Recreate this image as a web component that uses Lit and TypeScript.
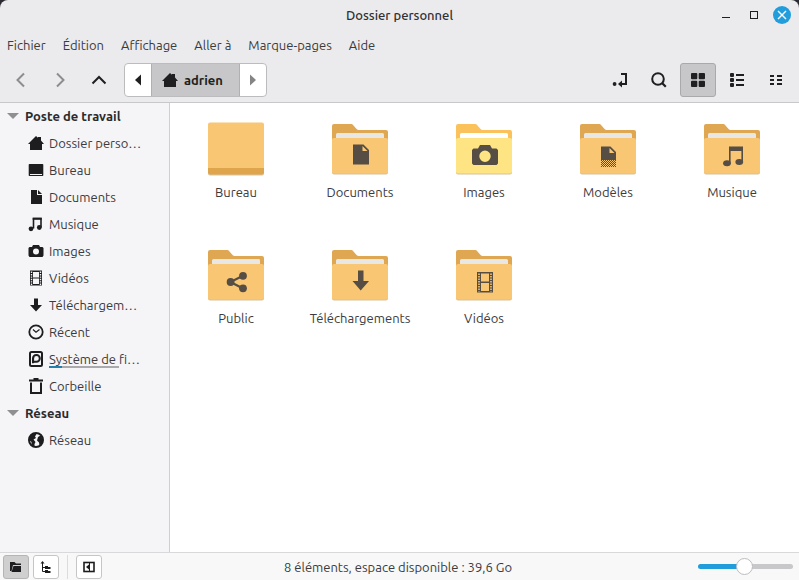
import { LitElement, html, css, svg } from "lit";
import type { SVGTemplateResult } from "lit";
import { customElement, state } from "lit/decorators.js";
import { classMap } from "lit/directives/class-map.js";

/* 16-unit symbolic glyphs, drawn in the current text colour */
const glyphs: Record<string, SVGTemplateResult> = {
  home: svg`<path d="M8 1 10 2.8V2h3v3.6L16 9h-2v6H2V9H0z" fill="currentColor"/>`,
  desktop: svg`<path d="M1.500 2h13a.8.8 0 0 1 .8.8v10.400a.8.8 0 0 1-.8.8h-13a.8.8 0 0 1-.8-.8V2.800a.8.8 0 0 1 .8-.8z" fill="currentColor"/><path d="M2 12.500h12" stroke="#f5f5f7"/>`,
  document: svg`<path d="M3 1h6v5h5v9H3z" fill="currentColor"/><path d="M10 1l4 4h-4z" fill="currentColor"/>`,
  music: svg`<path d="M5.500 12.500V2.500H13v9" fill="none" stroke="currentColor" stroke-width="1.600"/><path d="M4.700 1.700h9v2h-9z" fill="currentColor"/><circle cx="3" cy="12.800" r="2.400" fill="currentColor"/><circle cx="11.300" cy="11.500" r="2.400" fill="currentColor"/>`,
  camera: svg`<path fill-rule="evenodd" d="M5 2h6l1 2h2.500L15.500 5v7.500l-1 1.500h-13l-1-1.500V5l1-1H4zM8 5.500a3 3 0 1 0 0 6 3 3 0 0 0 0-6z" fill="currentColor"/>`,
  film: svg`<path fill-rule="evenodd" d="M2 .5h12v15H2zM5 2v5.400h6V2zM5 8.600V14h6V8.600z" fill="currentColor"/><path d="M3.500 1.600v14M12.500 1.600v14" stroke="#f5f5f7" stroke-width="1.400" stroke-dasharray="1.400 1"/>`,
  download: svg`<path d="M6 1.500h4V8h4l-6 6.500L2 8h4z" fill="currentColor"/>`,
  recent: svg`<circle cx="8" cy="8" r="6.700" fill="none" stroke="currentColor" stroke-width="1.800"/><path d="M5 5.500 8 8.300l3.500-2.800" fill="none" stroke="currentColor" stroke-width="1.200"/>`,
  disk: svg`<rect x="2" y="1" width="12" height="14" rx="1.500" fill="none" stroke="currentColor" stroke-width="2"/><path fill-rule="evenodd" d="M4 12.200V7.500a4.400 4.400 0 1 1 4.400 4.300H6.500L5.500 12.200zM8.500 5.100a2.400 2.400 0 0 0-2.400 2.400v2.200h2.400a2.300 2.300 0 0 0 0-4.600z" fill="currentColor"/>`,
  trash: svg`<path d="M1 2.500h14M5.500 1h5" stroke="currentColor" stroke-width="2"/><path d="M3 4.500V15h10V4.500" fill="none" stroke="currentColor" stroke-width="2"/>`,
  globe: svg`<circle cx="8" cy="8" r="7" fill="none" stroke="currentColor" stroke-width="2"/><path d="M1.500 5 5 1.500l3.500.5L7 4.500 8 6 5.500 7.500 7.500 10l-1 2v3L3.500 13V10L1 8zM10 5l2.500-1.500L15 7l-1 4-2.500 2.500-.5-3L9 8.500z" fill="currentColor"/>`,
  back: svg`<path d="M11 1.500 4.500 8l6.500 6.500" fill="none" stroke="currentColor" stroke-width="2"/>`,
  forward: svg`<path d="M5 1.500 11.500 8 5 14.500" fill="none" stroke="currentColor" stroke-width="2"/>`,
  up: svg`<path d="M1.500 11.500 8 5l6.500 6.500" fill="none" stroke="currentColor" stroke-width="2"/>`,
  left: svg`<path d="M11 2.500v11L5 8z" fill="currentColor"/>`,
  right: svg`<path d="M5 2.500v11L11 8z" fill="currentColor"/>`,
  location: svg`<path d="M9 2h5v10H9.500" fill="none" stroke="currentColor" stroke-width="2"/><path d="M10 8.500v7L6 12z" fill="currentColor"/><circle cx="2.600" cy="12" r="1.900" fill="currentColor"/>`,
  search: svg`<circle cx="7" cy="7" r="5.800" fill="none" stroke="currentColor" stroke-width="2"/><path d="m11 11 3.800 3.800" stroke="currentColor" stroke-width="2.200"/>`,
  grid: svg`<rect x="1" y="1" width="6.300" height="6.300" rx="1" fill="currentColor"/><rect x="8.700" y="1" width="6.300" height="6.300" rx="1" fill="currentColor"/><rect x="1" y="8.700" width="6.300" height="6.300" rx="1" fill="currentColor"/><rect x="8.700" y="8.700" width="6.300" height="6.300" rx="1" fill="currentColor"/>`,
  list: svg`<rect x="1" y="1" width="4" height="4" rx="1" fill="currentColor"/><rect x="1" y="6" width="4" height="4" rx="1" fill="currentColor"/><rect x="1" y="11" width="4" height="4" rx="1" fill="currentColor"/><path d="M7 3h8M7 8h8M7 13h8" stroke="currentColor" stroke-width="2"/>`,
  compact: svg`<path d="M2 4h4M2 8h4M2 12h4M9 4h5M9 8h5M9 12h5" stroke="currentColor" stroke-width="2"/>`,
  minimize: svg`<path d="M4 10.500h8" stroke="currentColor"/>`,
  maximize: svg`<rect x="4.500" y="4.500" width="7" height="7" fill="none" stroke="currentColor"/>`,
  close: svg`<path d="m4 4 8 8M12 4l-8 8" stroke="currentColor" stroke-width="1.400"/>`,
  folder: svg`<path d="M2 3h4.500L8 4.500h5V6H5l-1.500 6H2z" fill="currentColor"/><path d="M5.500 7H13v6H3.500z" fill="currentColor"/>`,
  tree: svg`<path d="M4.500 4v8.500H7M4.500 8.500H7" fill="none" stroke="currentColor"/><path d="M2.500 4.500 4.500 2l2 2.500zM7 7h3v1h2.500v2H7zM7 11h3v1h2.500v2H7z" fill="currentColor"/>`,
  panel: svg`<rect x="3" y="3.500" width="10" height="9" fill="none" stroke="currentColor" stroke-width="1.600"/><path d="M8.500 3v10" stroke="currentColor"/><path d="M8 5.500v5L5 8z" fill="currentColor"/>`,
};

/* 64-unit emblems stamped on the folder fronts */
const emblems: Record<string, SVGTemplateResult> = {
  document: svg`<path fill-rule="evenodd" d="M25 27.500h10.500l5.500 5.500v14.500H25zM34.500 29v5h5z"/>`,
  camera: svg`<path fill-rule="evenodd" d="M28 28h10l2 3.500h4.500l1.500 1.500v13.500l-1.500 1.500h-23L20 46.500V33l1.500-1.500H26zM33 33.500a5.700 5.700 0 1 0 0 11.400 5.700 5.700 0 0 0 0-11.400z"/>`,
  template: svg`<path fill-rule="evenodd" d="M25 29.500h9.500l5.500 5.500v8H25zM33.500 31v5h5z"/><path d="M25 43.500h15M25 45.500h15M25 47.500h15M25 49.500h15" stroke="#564e45" stroke-dasharray="1 1"/><path d="M26 44.500h14M26 46.500h14M26 48.500h14" stroke="#564e45" stroke-dasharray="1 1"/>`,
  music: svg`<path d="M29 29.500h14V46h-1.600V34H30.600v12.500H29z"/><ellipse cx="27" cy="46.300" rx="3.900" ry="3"/><ellipse cx="39.300" cy="45" rx="3.900" ry="3"/>`,
  share: svg`<path d="M39 32.800 26.500 39 39 45.500" fill="none" stroke="#564e45" stroke-width="2.200"/><circle cx="39" cy="32.800" r="3.900"/><circle cx="26.600" cy="39" r="3.900"/><circle cx="39" cy="45.300" r="3.900"/>`,
  download: svg`<path d="M30 27.500h5.500V38H41l-8.300 9.500L24.500 38H30z"/>`,
  film: svg`<path fill-rule="evenodd" d="M25 29h16v20.500H25zM29 30.500v8h8v-8zM29 40v8h8v-8z"/><path d="M27 30.500v18M39 30.500v18" stroke="#f9c673" stroke-width="1.600" stroke-dasharray="1.500 1"/>`,
};

const icon = (name: string) =>
  html`<svg class="icon" viewBox="0 0 16 16" aria-hidden="true">${glyphs[name]}</svg>`;

const folderArt = (emblem: string, bright = false) => html`
  <svg class="art" viewBox="0 0 64 64" aria-hidden="true">
    <path d="M6 7h17.500c2 0 4.500 6 7 6H58a2 2 0 0 1 2 2v14H4V9a2 2 0 0 1 2-2z" fill=${bright ? "#fbc25c" : "#dfa752"} />
    <path d="M8 24v-6.500A1.500 1.500 0 0 1 9.500 16h45a1.500 1.500 0 0 1 1.500 1.500V24z" fill=${bright ? "#ffffff" : "#e9e7e4"} />
    <path d="M4 24h56v31.500a2 2 0 0 1-2 2H6a2 2 0 0 1-2-2z" fill="#d8c19a" />
    <rect x="4" y="21" width="56" height="35.500" rx="2" fill=${bright ? "#ffe484" : "#f9c673"} />
    <g fill="#564e45">${emblems[emblem]}</g>
  </svg>
`;

const desktopArt = () => html`
  <svg class="art" viewBox="0 0 64 64" aria-hidden="true">
    <rect x="4" y="8" width="56" height="50.500" rx="2" fill="#d9c4a0" />
    <rect x="4" y="7" width="56" height="50.500" rx="2" fill="#dfa54c" />
    <path d="M6 5.500h52a2 2 0 0 1 2 2V51H4V7.500a2 2 0 0 1 2-2z" fill="#f9c673" />
  </svg>
`;

interface Place { label: string; icon: string; usage?: number; }

const sections: { title: string; places: Place[] }[] = [
  {
    title: "Poste de travail",
    places: [
      { label: "Dossier perso…", icon: "home" },
      { label: "Bureau", icon: "desktop" },
      { label: "Documents", icon: "document" },
      { label: "Musique", icon: "music" },
      { label: "Images", icon: "camera" },
      { label: "Vidéos", icon: "film" },
      { label: "Téléchargem…", icon: "download" },
      { label: "Récent", icon: "recent" },
      { label: "Système de fi…", icon: "disk", usage: 18 },
      { label: "Corbeille", icon: "trash" },
    ],
  },
  { title: "Réseau", places: [{ label: "Réseau", icon: "globe" }] },
];

const files = [
  { label: "Bureau", emblem: "" },
  { label: "Documents", emblem: "document" },
  { label: "Images", emblem: "camera", bright: true },
  { label: "Modèles", emblem: "template" },
  { label: "Musique", emblem: "music" },
  { label: "Public", emblem: "share" },
  { label: "Téléchargements", emblem: "download" },
  { label: "Vidéos", emblem: "film" },
];

const menus = ["Fichier", "Édition", "Affichage", "Aller à", "Marque-pages", "Aide"];

const views = [
  { id: "grid", label: "Vue en icônes" },
  { id: "list", label: "Vue en liste" },
  { id: "compact", label: "Vue compacte" },
];

@customElement("app-root")
export class AppRoot extends LitElement {
  @state() private view = "grid";
  @state() private zoom = 49;

  static styles = css`
    :host {
      display: block;
      background: #2a2a32;
      color: #3b3b3e;
      font: 13px/18px Ubuntu, "Noto Sans", sans-serif;
    }
    * { box-sizing: border-box; }
    button {
      display: flex;
      align-items: center;
      justify-content: center;
      margin: 0;
      padding: 0;
      border: 0;
      background: none;
      color: inherit;
      font: inherit;
    }
    a { color: inherit; text-decoration: none; }
    .window {
      display: flex;
      flex-direction: column;
      min-height: 100vh;
      overflow: hidden;
      border-radius: 8px 8px 0 0;
      background: #ebebed;
    }
    .icon { flex: none; width: 16px; height: 16px; }

    .titlebar {
      display: grid;
      grid-template-columns: 1fr auto 1fr;
      align-items: center;
      height: 30px;
      padding: 0 3px;
    }
    .title {
      grid-column: 2;
      margin: 0;
      color: #303033;
      font-size: 13px;
      font-weight: 500;
    }
    .controls { display: flex; justify-content: flex-end; color: #1f1f22; }
    .control { width: 28px; height: 30px; }
    .disc {
      display: flex;
      align-items: center;
      justify-content: center;
      width: 18px;
      height: 18px;
      border-radius: 50%;
      background: #219ddb;
      color: #fff;
    }

    .menubar { display: flex; gap: 17px; height: 30px; padding: 0 7px; }

    .toolbar {
      display: flex;
      align-items: center;
      gap: 3px;
      height: 43px;
      padding: 0 5px 3px 3px;
      border-bottom: 1px solid #c8c8ca;
      color: #1f1f22;
    }
    .tool {
      width: 36px;
      height: 34px;
      border: 1px solid transparent;
      border-radius: 3px;
    }
    .tool:disabled { color: #8d8d90; }
    .tool.active { border-color: #a9a9ab; background: #c7c7c9; }
    .pathbar {
      display: flex;
      height: 34px;
      margin: 0 auto 0 4px;
      overflow: hidden;
      border: 1px solid #bcbcbe;
      border-radius: 4px;
      background: #fff;
    }
    .step { width: 26px; }
    .step:disabled { color: #848487; }
    .crumb {
      gap: 6px;
      padding: 0 16px 0 10px;
      border: solid #b0b0b2;
      border-width: 0 1px;
      background: #c7c7c9;
      font-weight: 700;
    }

    .body { display: flex; flex: 1; }
    .sidebar {
      flex: none;
      width: 170px;
      border-right: 1px solid #cfcfd1;
      background: #f5f5f7;
    }
    .heading {
      gap: 6px;
      height: 27px;
      padding: 0 0 2px 7px;
      color: #2b2b2e;
      font-weight: 700;
    }
    .heading::before {
      content: "";
      border: solid transparent;
      border-width: 6px 6px 0;
      border-top-color: #8f8f91;
    }
    .places { margin: 0; padding: 0; list-style: none; }
    .place {
      display: flex;
      align-items: center;
      gap: 5px;
      height: 27px;
      padding: 0 0 2px 28px;
      white-space: nowrap;
    }
    .place .icon { color: #1d1d1f; }
    .name { position: relative; }
    .usage {
      position: absolute;
      bottom: 0;
      left: 0;
      width: 70px;
      height: 2px;
      background: #aaa9ac;
    }
    .used { display: block; height: 100%; background: #237fac; }

    .files {
      display: grid;
      flex: 1;
      grid-template-columns: repeat(auto-fill, 124px);
      align-content: start;
      row-gap: 42px;
      margin: 0;
      padding: 14px 4px;
      background: #fff;
      list-style: none;
    }
    .file {
      display: flex;
      flex-direction: column;
      align-items: center;
      gap: 2px;
    }
    .art { width: 64px; height: 64px; }

    .statusbar {
      display: grid;
      grid-template-columns: 1fr auto 1fr;
      align-items: center;
      height: 28px;
      padding: 0 6px 0 3px;
      border-top: 1px solid #d9d9db;
      background: #f8f8f8;
    }
    .panes { display: flex; gap: 4px; color: #1d1d1f; }
    .pane {
      width: 26px;
      height: 24px;
      border: 1px solid #c6c6c8;
      border-radius: 3px;
      background: #fff;
    }
    .pane.active { border-color: #b5b5b7; background: #cfcfd0; }
    .divider { width: 1px; margin: 0 4px; background: #dcdcde; }
    .zoom {
      justify-self: end;
      width: 95px;
      height: 18px;
      margin: 0;
      appearance: none;
      background: none;
    }
    .zoom::-webkit-slider-runnable-track {
      height: 5px;
      border-radius: 3px;
      background: linear-gradient(to right, #219ddb 49%, #c8c8ca 49%);
    }
    .zoom::-webkit-slider-thumb {
      width: 17px;
      height: 17px;
      margin-top: -6px;
      appearance: none;
      border: 1px solid #bdbdbf;
      border-radius: 50%;
      background: #fff;
    }
  `;

  private selectView(id: string) {
    this.view = id;
  }

  private onZoom(event: Event) {
    this.zoom = Number((event.target as HTMLInputElement).value);
  }

  render() {
    return html`
      <div class="window">
        <header class="titlebar">
          <h1 class="title">Dossier personnel</h1>
          <div class="controls">
            <button class="control" aria-label="Réduire">${icon("minimize")}</button>
            <button class="control" aria-label="Agrandir">${icon("maximize")}</button>
            <button class="control" aria-label="Fermer"><span class="disc">${icon("close")}</span></button>
          </div>
        </header>

        <nav class="menubar" aria-label="Menu">
          ${menus.map((menu) => html`<button>${menu}</button>`)}
        </nav>

        <div class="toolbar" role="toolbar">
          <button class="tool" aria-label="Précédent" disabled>${icon("back")}</button>
          <button class="tool" aria-label="Suivant" disabled>${icon("forward")}</button>
          <button class="tool" aria-label="Dossier parent">${icon("up")}</button>
          <div class="pathbar">
            <button class="step" aria-label="Reculer">${icon("left")}</button>
            <button class="crumb">${icon("home")}adrien</button>
            <button class="step" aria-label="Avancer" disabled>${icon("right")}</button>
          </div>
          <button class="tool" aria-label="Emplacement">${icon("location")}</button>
          <button class="tool" aria-label="Rechercher">${icon("search")}</button>
          ${views.map(
            (view) => html`<button
              class=${classMap({ tool: true, active: this.view === view.id })}
              aria-label=${view.label}
              @click=${() => this.selectView(view.id)}
            >${icon(view.id)}</button>`
          )}
        </div>

        <div class="body">
          <nav class="sidebar" aria-label="Emplacements">
            ${sections.map(
              (section) => html`
                <button class="heading" aria-expanded="true">${section.title}</button>
                <ul class="places">
                  ${section.places.map(
                    (place) => html`<li>
                      <a class="place" href="#">
                        ${icon(place.icon)}
                        <span class="name">${place.label}${place.usage === undefined
                          ? null
                          : html`<span class="usage"><span class="used" style="width:${place.usage}%"></span></span>`}</span>
                      </a>
                    </li>`
                  )}
                </ul>
              `
            )}
          </nav>
          <ul class="files">
            ${files.map(
              (file) => html`<li>
                <a class="file" href="#">
                  ${file.emblem ? folderArt(file.emblem, file.bright) : desktopArt()}
                  <span>${file.label}</span>
                </a>
              </li>`
            )}
          </ul>
        </div>

        <footer class="statusbar">
          <div class="panes">
            <button class="pane active" aria-label="Emplacements">${icon("folder")}</button>
            <button class="pane" aria-label="Arborescence">${icon("tree")}</button>
            <span class="divider"></span>
            <button class="pane" aria-label="Masquer le panneau">${icon("panel")}</button>
          </div>
          <span>8 éléments, espace disponible : 39,6 Go</span>
          <input class="zoom" type="range" min="0" max="100" aria-label="Zoom" .value=${String(this.zoom)} @input=${this.onZoom} />
        </footer>
      </div>
    `;
  }
}
